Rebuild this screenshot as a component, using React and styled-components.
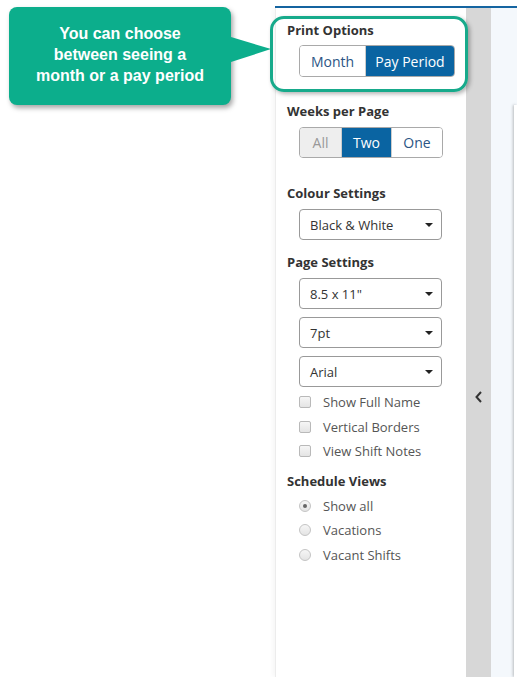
import React from 'react';
import styled, { createGlobalStyle } from 'styled-components';

const GlobalStyle = createGlobalStyle`
  html, body {
    margin: 0;
    padding: 0;
    background: #fff;
  }
  body {
    font-family: "Open Sans", "Liberation Sans", Arial, sans-serif;
  }
`;

const Page = styled.div`
  display: flex;
  width: 517px;
  height: 677px;
  overflow: hidden;
`;

const Notes = styled.div`
  width: 275px;
  flex-shrink: 0;
  padding: 7px 0 0 9px;
  box-sizing: border-box;
`;

const Callout = styled.div`
  position: relative;
  width: 222px;
  height: 98px;
  background: #0cae8c;
  border-radius: 8px;
  box-shadow: 2px 3px 5px rgba(0, 0, 0, 0.35);
  display: flex;
  align-items: center;
  justify-content: center;
  text-align: center;
  color: #fff;
  font-family: "Liberation Sans", Arial, sans-serif;
  font-weight: 700;
  font-size: 16px;
  line-height: 21px;
  padding-bottom: 4px;
  box-sizing: border-box;

  &::after {
    content: '';
    position: absolute;
    left: 100%;
    top: 30px;
    border-left: 40px solid #0cae8c;
    border-top: 12px solid transparent;
    border-bottom: 13px solid transparent;
  }
`;

const Screen = styled.div`
  flex: 1;
  display: flex;
  margin-top: 6px;
  border-top: 2px solid #1565a1;
`;

const Panel = styled.div`
  position: relative;
  width: 191px;
  flex-shrink: 0;
  padding: 13px 0 0 11px;
  box-sizing: border-box;
  border-left: 1px solid #ececec;
  box-shadow: -3px 0 4px rgba(0, 0, 0, 0.03);
`;

const Highlight = styled.div`
  position: absolute;
  left: -6px;
  top: 8px;
  width: 198px;
  height: 76px;
  box-sizing: border-box;
  border: 3px solid #17aa8b;
  border-radius: 14px;
  box-shadow: 2px 2px 4px rgba(0, 0, 0, 0.3);
  pointer-events: none;
`;

const Section = styled.div`
  margin-bottom: ${p => p.$gap}px;
`;

const Label = styled.div`
  font-size: 13px;
  font-weight: 700;
  line-height: 18px;
  color: #333;
  margin-bottom: ${p => p.$space || 7}px;
`;

const Controls = styled.div`
  padding-left: 12px;
  display: flex;
  flex-direction: column;
  gap: ${p => p.$gap || 0}px;
`;

const Toggle = styled.div`
  display: inline-flex;
  align-self: flex-start;
  height: ${p => p.$height}px;
  border: 1px solid #a9a9a9;
  border-radius: 4px;
  overflow: hidden;
  box-sizing: border-box;
`;

const ToggleButton = styled.div`
  display: flex;
  align-items: center;
  justify-content: center;
  width: ${p => p.$width}px;
  box-sizing: border-box;
  font-size: 14px;
  background: ${p => (p.$active ? '#0a64a2' : p.$muted ? '#eeeeee' : '#fff')};
  color: ${p => (p.$active ? '#fff' : p.$muted ? '#999' : '#2b5584')};
  & + & {
    border-left: 1px solid ${p => (p.$active ? '#0a64a2' : '#ccc')};
  }
`;

const Select = styled.div`
  width: 143px;
  height: 31px;
  box-sizing: border-box;
  border: 1px solid #999;
  border-radius: 4px;
  display: flex;
  align-items: center;
  justify-content: space-between;
  padding: 0 8px 0 10px;
  font-size: 13px;
  color: #333;
`;

const Caret = styled.span`
  width: 0;
  height: 0;
  border-left: 4px solid transparent;
  border-right: 4px solid transparent;
  border-top: 4px solid #222;
`;

const OptionRow = styled.label`
  display: flex;
  align-items: center;
  height: 24.5px;
  font-size: 13px;
  color: #555;
`;

const Box = styled.span`
  width: 10px;
  height: 10px;
  margin-right: 12px;
  border: 1px solid #b9b9b9;
  border-radius: 2px;
  background: linear-gradient(#f6f6f6, #e4e4e4);
`;

const Radio = styled.span`
  width: 10px;
  height: 10px;
  margin-right: 12px;
  border: 1px solid #c4c4c4;
  border-radius: 50%;
  background: linear-gradient(#f6f6f6, #e4e4e4);
  display: flex;
  align-items: center;
  justify-content: center;
  &::after {
    content: '';
    width: 4px;
    height: 4px;
    border-radius: 50%;
    background: ${p => (p.$checked ? '#666' : 'transparent')};
  }
`;

const Gutter = styled.div`
  width: 25px;
  flex-shrink: 0;
  background: #d7d7d7;
  display: flex;
  justify-content: center;
  padding-top: 383px;
  box-sizing: border-box;
`;

const Preview = styled.div`
  flex: 1;
  background: #f4f8fc;
  padding: 97px 0 0 23px;
  box-sizing: border-box;
`;

const Sheet = styled.div`
  height: 100%;
  background: #fff;
  box-shadow: -1px 0 3px rgba(0, 0, 0, 0.25);
`;

const checks = ['Show Full Name', 'Vertical Borders', 'View Shift Notes'];
const views = ['Show all', 'Vacations', 'Vacant Shifts'];

export default function App() {
  return (
    <>
      <GlobalStyle />
      <Page>
        <Notes>
          <Callout>
            You can choose
            <br />
            between seeing a
            <br />
            month or a pay period
          </Callout>
        </Notes>
        <Screen>
          <Panel>
            <Highlight />
            <Section $gap={25}>
              <Label $space={6}>Print Options</Label>
              <Controls>
                <Toggle $height={32}>
                  <ToggleButton $width={65}>Month</ToggleButton>
                  <ToggleButton $width={89} $active>Pay Period</ToggleButton>
                </Toggle>
              </Controls>
            </Section>
            <Section $gap={26}>
              <Label>Weeks per Page</Label>
              <Controls>
                <Toggle $height={31}>
                  <ToggleButton $width={41} $muted>All</ToggleButton>
                  <ToggleButton $width={50} $active>Two</ToggleButton>
                  <ToggleButton $width={51}>One</ToggleButton>
                </Toggle>
              </Controls>
            </Section>
            <Section $gap={13}>
              <Label>Colour Settings</Label>
              <Controls>
                <Select>
                  Black &amp; White <Caret />
                </Select>
              </Controls>
            </Section>
            <Section $gap={3}>
              <Label>Page Settings</Label>
              <Controls $gap={8}>
                <Select>
                  8.5 x 11" <Caret />
                </Select>
                <Select>
                  7pt <Caret />
                </Select>
                <Select>
                  Arial <Caret />
                </Select>
              </Controls>
            </Section>
            <Section $gap={8}>
              <Controls>
                {checks.map(c => (
                  <OptionRow key={c}>
                    <Box />
                    {c}
                  </OptionRow>
                ))}
              </Controls>
            </Section>
            <Section $gap={0}>
              <Label $space={4}>Schedule Views</Label>
              <Controls>
                {views.map((v, i) => (
                  <OptionRow key={v}>
                    <Radio $checked={i === 0} />
                    {v}
                  </OptionRow>
                ))}
              </Controls>
            </Section>
          </Panel>
          <Gutter>
            <svg width="10" height="12" viewBox="0 0 10 12">
              <polyline points="7,1 2.5,6 7,11" fill="none" stroke="#333" strokeWidth="2" />
            </svg>
          </Gutter>
          <Preview>
            <Sheet />
          </Preview>
        </Screen>
      </Page>
    </>
  );
}
